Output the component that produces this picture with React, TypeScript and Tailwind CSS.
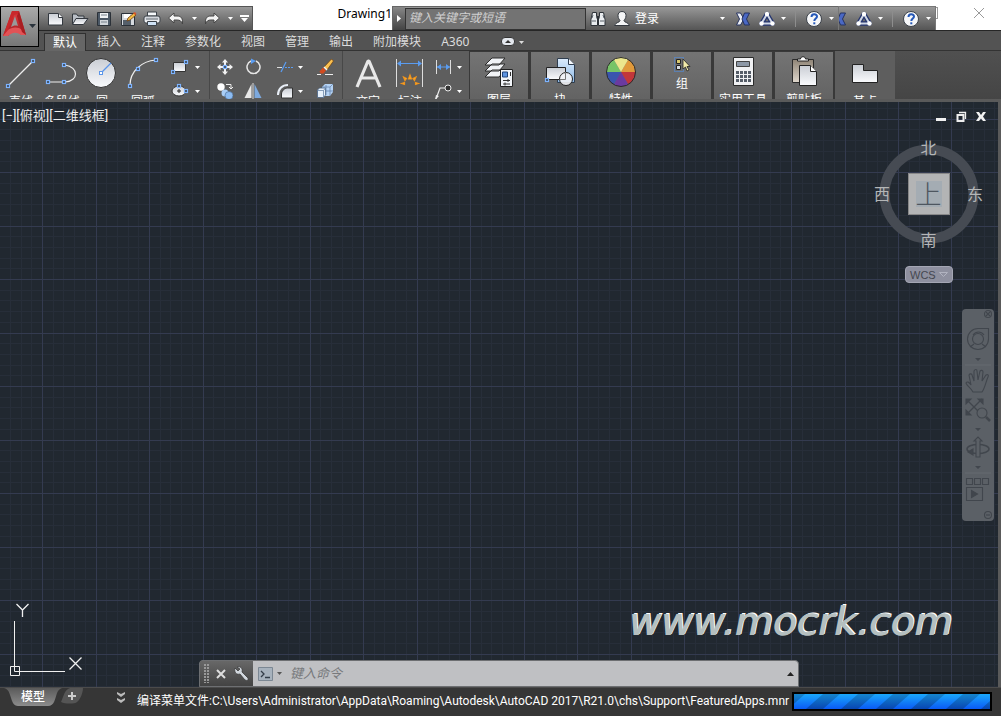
import { ReactNode } from "react";
import clsx from "clsx";

interface IconProps {
  size?: number;
  children: ReactNode;
}

const Icon = ({ size = 18, children }: IconProps) => (
  <svg width={size} height={size} viewBox={`0 0 ${size} ${size}`} fill="none" className="shrink-0" aria-hidden="true">
    {children}
  </svg>
);

// shared gradients for the icons
const Gradients = () => (
  <svg width="0" height="0" className="absolute" aria-hidden="true">
    <defs>
      <linearGradient id="paper" x1="0" y1="0" x2="0" y2="1">
        <stop offset="0" stopColor="#c9cdd4" />
        <stop offset="1" stopColor="#fafbfd" />
      </linearGradient>
      <linearGradient id="blue" x1="0" y1="0" x2="0" y2="1">
        <stop offset="0" stopColor="#dcebfb" />
        <stop offset="1" stopColor="#8db9e6" />
      </linearGradient>
      <linearGradient id="tan" x1="0" y1="0" x2="0" y2="1">
        <stop offset="0" stopColor="#8f8476" />
        <stop offset="1" stopColor="#e0d8cd" />
      </linearGradient>
      <linearGradient id="red" x1="0" y1="0" x2="0" y2="1">
        <stop offset="0" stopColor="#e2393d" />
        <stop offset="1" stopColor="#9b1c20" />
      </linearGradient>
      <linearGradient id="tab" x1="0" y1="0" x2="0" y2="1">
        <stop offset="0" stopColor="#5a5a5a" />
        <stop offset="1" stopColor="#8c8c8c" />
      </linearGradient>
    </defs>
  </svg>
);

const Grip = ({ x, y }: { x: number; y: number }) => (
  <rect x={x - 1.5} y={y - 1.5} width="3" height="3" fill="#3c4550" stroke="#7db3ff" strokeWidth="1.2" />
);

const Caret = ({ className }: { className?: string }) => (
  <button aria-label="更多" className={clsx("flex h-4 shrink-0 items-center justify-center", className)}>
    <svg width="5" height="3" viewBox="0 0 5 3" aria-hidden="true"><path d="M0 0h5L2.500 3z" fill="currentColor" /></svg>
  </button>
);

const NewIcon = () => (
  <Icon><path d="M1.500 3.500h10l4 3.500v8h-14z" fill="url(#paper)" stroke="#33383f" /><path d="M11.500 3.500v4h4" fill="#fff" stroke="#33383f" /></Icon>
);
const OpenIcon = () => (
  <Icon>
    <path d="M1.500 14V4h4l1.500 2h6v3" fill="#b9bec5" stroke="#33383f" />
    <path d="M1.500 14.500L5 8.500h12l-4.500 6z" fill="url(#paper)" stroke="#33383f" />
  </Icon>
);
const SaveIcon = () => (
  <Icon>
    <path d="M2.500 2.500h13v13h-13z" fill="#4b5866" stroke="#2b3138" />
    <path d="M5 3h8v5H5z" fill="#eef1f4" /><path d="M5 10h8v5H5z" fill="#d0d5da" />
    <path d="M6 12h6M6 5h6" stroke="#77818c" />
  </Icon>
);
const SaveAsIcon = () => (
  <Icon>
    <path d="M2.500 3.500h13v12h-13z" fill="#d6dadf" stroke="#2b3138" />
    <path d="M5 4h6v4H5z" fill="#fff" /><path d="M4 10h8v5H4z" fill="#555f6a" />
    <path d="M8 11l1-3 6-5 2 2-6 5z" fill="#f4bd45" stroke="#6c3e13" strokeWidth=".8" /><path d="M14 3l2-1 1.500 2-1.500 1z" fill="#d7562a" />
  </Icon>
);
const PrintIcon = () => (
  <Icon>
    <path d="M4.500 2h9v4h-9z" fill="#f6f8fa" stroke="#3c4249" />
    <rect x="1" y="6" width="16" height="7" rx="2" fill="url(#paper)" stroke="#3c4249" />
    <path d="M3 9h12" stroke="#616971" /><path d="M4.500 11.500h9v4h-9z" fill="#cfe2f5" stroke="#3c4249" />
  </Icon>
);
const UndoIcon = () => (
  <Icon><path d="M1.500 8l5.500-5v3h3c4 0 6 2 5.500 8-1-3-2.500-4-5.500-4H7v3z" fill="#f3f3f3" stroke="#454545" /></Icon>
);
const RedoIcon = () => (
  <Icon><path d="M16.500 8L11 3v3H8c-4 0-6 2-5.500 8 1-3 2.500-4 5.500-4h3v3z" fill="#f3f3f3" stroke="#454545" /></Icon>
);

const BinocularsIcon = () => (
  <Icon>
    <path d="M3.500 2.500h4v4l1 3v6h-6.500v-6zM14.500 2.500h-4v4l-1 3v6H16v-6z" fill="#e9ecef" stroke="#2d3238" />
    <path d="M8 6h2v4H8z" fill="#2d3238" /><path d="M3 8l1-3M15 8l-1-3M3 11h4M11 11h4" stroke="#5a626a" />
  </Icon>
);
const UserIcon = () => (
  <Icon><path d="M9 1.500c3 0 4 2 4 4 0 3-1.500 4-2 5 0 2 5 2 5.500 5h-15c.500-3 5.500-3 5.500-5-.500-1-2-2-2-5 0-2 1-4 4-4z" fill="#f4f5f6" stroke="#33383f" /></Icon>
);
const ExchangeIcon = () => (
  <Icon>
    <path d="M2.500 3h4l3.500 6-3.500 6h-4l3-6z" fill="#eceff5" stroke="#253260" />
    <path d="M15.500 3h-5L8 9l2.500 6h5l-3-6z" fill="#4a68c4" stroke="#253260" />
  </Icon>
);
const A360Icon = () => (
  <Icon>
    <path d="M9 4L14.500 13.500H3.500z" stroke="#25356f" strokeWidth="4.500" strokeLinejoin="round" />
    <path d="M9 4L14.500 13.500H3.500z" stroke="#cfd6e4" strokeWidth="2" strokeLinejoin="round" />
    <circle cx="9" cy="4" r="2.200" fill="#fff" /><circle cx="3.500" cy="13.500" r="2.200" fill="#fff" /><circle cx="14.500" cy="13.500" r="2.200" fill="#fff" />
  </Icon>
);
const HelpIcon = () => (
  <Icon>
    <circle cx="9" cy="9" r="7.500" fill="#f6f7f9" stroke="#3c424a" />
    <path d="M6.500 7c0-3.500 5.500-3.500 5.500-.500C12 8.500 9.300 8.500 9.300 11" stroke="#2558b8" strokeWidth="2" /><path d="M8.300 12.300h2v2h-2z" fill="#2558b8" />
  </Icon>
);

const quickTools = [
  { label: "新建", icon: NewIcon },
  { label: "打开", icon: OpenIcon },
  { label: "保存", icon: SaveIcon },
  { label: "另存为", icon: SaveAsIcon },
  { label: "打印", icon: PrintIcon },
  { label: "放弃", icon: UndoIcon, more: true },
  { label: "重做", icon: RedoIcon, more: true },
];

const ServiceTools = ({ clipped }: { clipped?: boolean }) => (
  <>
    <button aria-label="Exchange" className={clsx("flex h-full shrink-0 items-center overflow-hidden", clipped ? "w-[13px] justify-end pr-1" : "w-6 justify-center")}><ExchangeIcon /></button>
    <button aria-label="Autodesk 360" className="flex h-full w-6 shrink-0 items-center justify-center"><A360Icon /></button>
    <Caret className="w-2" />
    <span className="mx-2 h-4 w-px bg-[#8d8d8d]" />
    <button aria-label="帮助" className="flex h-full w-5 shrink-0 items-center justify-center"><HelpIcon /></button>
    <Caret className="w-[14px]" />
  </>
);

const TitleBar = () => (
  <header className="flex h-[31px] items-end border-b border-[#262626] bg-white text-white">
    <div className="ml-[39px] flex h-6 w-[214px] items-center border-t border-r border-[#555] bg-gradient-to-b from-[#999] to-[#555] pl-[5px]">
      {quickTools.map(({ label, icon: Glyph, more }) => (
        <div key={label} className="flex items-center">
          <button aria-label={label} className="flex h-5 w-6 items-center justify-center"><Glyph /></button>
          {more && <Caret className="w-3" />}
        </div>
      ))}
      <button aria-label="自定义" className="flex w-4 justify-center">
        <svg width="9" height="7" viewBox="0 0 9 7" aria-hidden="true"><path d="M0 0h9v2H0zM1 3h7L4.500 7z" fill="#fff" /></svg>
      </button>
    </div>
    <h1 className="flex-1 self-start pt-1 text-right text-xs leading-5 text-black">Drawing1</h1>
    <div className="flex h-6 w-[446px] items-center border-t border-l border-[#666] bg-gradient-to-b from-[#989898] to-[#555]">
      <button aria-label="展开" className="flex h-full w-3 items-center justify-center bg-gradient-to-b from-[#888] to-[#444]">
        <svg width="4" height="7" viewBox="0 0 4 7" aria-hidden="true"><path d="M0 0l4 3.500L0 7z" fill="#fff" /></svg>
      </button>
      <input aria-label="搜索" placeholder="键入关键字或短语" className="h-[22px] w-[181px] border border-[#333] bg-[#737373] px-[3px] pb-[2px] text-xs italic text-white placeholder:text-[#d0d0d0]" />
      <button aria-label="查找" className="flex w-6 justify-center"><BinocularsIcon /></button>
      <button className="flex flex-1 items-center gap-1 pl-[3px] text-xs"><UserIcon />登录</button>
      <Caret className="mr-px w-4" />
      <ServiceTools />
    </div>
    <div className="flex h-6 w-[98px] items-center border-t border-r border-l border-[#777] bg-gradient-to-b from-[#989898] to-[#555]">
      <ServiceTools clipped />
    </div>
    <div className="flex w-[65px] items-center justify-between self-start pt-[7px] pr-4 text-[#999]">
      <span className="h-3 w-[2px] border-y border-r border-[#999]" />
      <button aria-label="关闭">
        <svg width="12" height="12" viewBox="0 0 12 12" aria-hidden="true"><path d="M1 1l10 10M11 1L1 11" stroke="currentColor" /></svg>
      </button>
    </div>
  </header>
);

const AppButton = () => (
  <button aria-label="应用程序菜单" className="absolute top-[6px] left-0 z-10 flex h-[41px] w-[39px] items-center border border-black bg-gradient-to-b from-[#aaa] to-[#777]">
    <svg width="37" height="38" viewBox="0 0 37 38" aria-hidden="true">
      <path d="M2 28L11 3h7l7 24h-5l-2-5-8 2-3 4z" fill="url(#red)" />
      <path d="M10 19l4-11 3 10c-3-1-5 0-7 1z" fill="#999" />
      <path d="M2 28c2-6 9-10 16-8l5 3 2 4h-5c-5-4-10-2-13 1z" fill="#e25356" />
      <path d="M11 3h7l-1 3-4 1-6 15-5 6z" fill="#c9282c" /><path d="M18 3l7 24-4-3-5-16z" fill="#a91d21" />
      <path d="M28 16h7l-3.500 4z" fill="#2a333c" />
    </svg>
  </button>
);

const tabs = ["插入", "注释", "参数化", "视图", "管理", "输出", "附加模块", "A360"];

const TabBar = () => (
  <nav className="flex h-5 items-end border-b border-[#333] bg-[#535353] pl-[44px] text-xs leading-4 text-[#dcdcdc]">
    <button className="-mb-px mr-px h-[18px] border-x border-t border-[#303030] bg-[#666] px-2 text-white">默认</button>
    {tabs.map((tab) => (
      <button key={tab} className="h-[18px] px-[10px] pt-[2px]">{tab}</button>
    ))}
    <button aria-label="最小化功能区" className="ml-[22px] mb-1 flex h-[9px] w-[14px] items-center justify-center rounded-sm border border-[#333] bg-[#e4e8ee]">
      <svg width="6" height="3" viewBox="0 0 6 3" aria-hidden="true"><path d="M0 3h6L3 0z" fill="#333" /></svg>
    </button>
    <Caret className="w-3" />
  </nav>
);

interface ToolProps {
  label: string;
  className?: string;
  children: ReactNode;
}

const BigTool = ({ label, className, children }: ToolProps) => (
  <button className={clsx("flex shrink-0 flex-col items-center overflow-hidden pt-1", className)}>
    {children}
    <span className="text-xs leading-4 whitespace-nowrap">{label}</span>
  </button>
);

const SmallTool = ({ label, className, children }: ToolProps) => (
  <button aria-label={label} className={clsx("flex h-6 shrink-0 items-center justify-center", className)}>{children}</button>
);

const DrawPanel = () => (
  <section aria-label="绘图" className="flex border-r border-[#484848] pr-1">
    <BigTool label="直线" className="w-[42px] gap-[3px]">
      <Icon size={36}><path d="M5 31L30 6" stroke="#eee" strokeWidth="1.200" /><Grip x={5} y={31} /><Grip x={30} y={6} /></Icon>
    </BigTool>
    <BigTool label="多段线" className="w-10 gap-[3px]">
      <Icon size={36}><path d="M4 27h17c14-1 14-15 0-17" stroke="#eee" strokeWidth="1.200" /><Grip x={4} y={27} /><Grip x={20} y={27} /><Grip x={20} y={10} /></Icon>
    </BigTool>
    <BigTool label="圆" className="w-10 gap-[3px]">
      <Icon size={36}><circle cx="17" cy="18" r="14.500" fill="url(#paper)" stroke="#333" /><path d="M17 18L27 8" stroke="#5a95ea" strokeWidth="1.300" /><rect x="15.500" y="16.500" width="3" height="3" fill="#fff" stroke="#5a95ea" /></Icon>
    </BigTool>
    <BigTool label="圆弧" className="w-[42px] gap-[3px]">
      <Icon size={36}><path d="M5 30C5 17 16 6 31 5" stroke="#eee" strokeWidth="1.200" /><Grip x={5} y={31} /><Grip x={13} y={14} /><Grip x={31} y={5} /></Icon>
    </BigTool>
    <div className="pt-1 pl-[7px]">
      <div className="flex items-center">
        <SmallTool label="矩形" className="w-[18px]">
          <Icon><path d="M2.500 4.500h12v9h-12z" fill="url(#paper)" stroke="#333" /><Grip x={2} y={14} /><Grip x={15} y={4} /></Icon>
        </SmallTool>
        <Caret className="w-4" />
      </div>
      <div className="flex items-center">
        <SmallTool label="椭圆" className="w-[18px]">
          <Icon><ellipse cx="8" cy="9" rx="7" ry="5" fill="url(#paper)" stroke="#333" /><path d="M6 9h4M8 7v4" stroke="#222" /><Grip x={8} y={4} /><Grip x={15} y={9} /></Icon>
        </SmallTool>
        <Caret className="w-4" />
      </div>
    </div>
  </section>
);

const ModifyPanel = () => (
  <section aria-label="修改" className="border-r border-[#484848] pt-1 pr-[2px] pl-px">
    <div className="flex items-center">
      <SmallTool label="移动" className="w-7">
        <Icon><path d="M9 1l3 3.500h-2V7H8V4.500H6zM9 17l3-3.500h-2V11H8v2.500H6zM1 9l3.500-3v2H7v2H4.500v2zM17 9l-3.500-3v2H11v2h2.500v2z" fill="#f2f2f2" /><Grip x={9} y={9} /></Icon>
      </SmallTool>
      <SmallTool label="旋转" className="w-7">
        <Icon><path d="M12 3a6.500 6.500 0 1 1-5 0" stroke="#e6e6e6" strokeWidth="1.500" /><path d="M7 0.500l5 2.500-5 3z" fill="#5a9cf0" /></Icon>
      </SmallTool>
      <SmallTool label="修剪" className="ml-[7px] w-[22px]">
        <Icon><path d="M1 9.500h5" stroke="#dcdcdc" /><path d="M5 14l5-10" stroke="#5a9cf0" strokeWidth="1.300" /><path d="M9 9.500h9" stroke="#5a9cf0" strokeDasharray="2 1" /></Icon>
      </SmallTool>
      <Caret className="w-2" />
      <SmallTool label="删除" className="ml-[6px] w-[30px]">
        <Icon><path d="M1 16.500h4M9 16.500h8" stroke="#eee" /><path d="M8 9l7.500-8 2 2L11 12z" fill="#f9c050" stroke="#6b3e10" strokeWidth=".7" /><path d="M8 9l3 3" stroke="#f4f4f4" strokeWidth="1.500" /><path d="M7 9.500l3 3-2.500 3H4.500l-1-2z" fill="#d24a1e" /></Icon>
      </SmallTool>
    </div>
    <div className="flex items-center">
      <SmallTool label="复制" className="w-7">
        <Icon><circle cx="5" cy="5" r="3.700" fill="#fff" /><circle cx="9" cy="11" r="3.500" fill="#a9cdf6" /><circle cx="13" cy="13.500" r="4" fill="#8dbcf2" stroke="#44668f" strokeWidth=".6" /><path d="M10 2.500h5v4M13 5l2 2 2-2" stroke="#eee" /></Icon>
      </SmallTool>
      <SmallTool label="镜像" className="w-7">
        <Icon><path d="M7.500 2v14h-7z" fill="#e8e8e8" /><path d="M10.500 2v14h7z" fill="#7da9de" /><path d="M9 1v17" stroke="#ddd" /></Icon>
      </SmallTool>
      <SmallTool label="圆角" className="ml-[7px] w-[22px]">
        <Icon><path d="M5.500 16V12c0-3 3-6 6-6h5v10z" fill="url(#paper)" stroke="#333" /><path d="M2 13C2 7 6 3 12 3" stroke="#e8eef6" strokeWidth="2" /></Icon>
      </SmallTool>
      <Caret className="w-2" />
      <SmallTool label="阵列" className="ml-[6px] w-[30px]">
        <Icon><path d="M6 5l3-3h8v8l-3 4H6z" fill="#b5d3f5" /><path d="M6 5h8v9M14 5l3-3M10 3v10M6 9h11" stroke="#5b7da6" strokeWidth=".7" /><path d="M1.500 8l2-2h6v7l-2 2.500h-6z" fill="#e6f0fb" stroke="#4a6487" strokeWidth=".8" /><path d="M1.500 8.500h6v7M7.500 8.500l2-2.500" stroke="#6b87a8" strokeWidth=".8" /></Icon>
      </SmallTool>
    </div>
  </section>
);

const AnnotatePanel = () => (
  <section aria-label="注释" className="flex">
    <BigTool label="文字" className="w-[50px] gap-[3px]">
      <Icon size={36}><path d="M7 32L18 6h1L30 32M11 23h15" stroke="#e8e8e8" strokeWidth="3.200" strokeLinejoin="bevel" /></Icon>
    </BigTool>
    <BigTool label="标注" className="w-[34px] gap-[3px]">
      <Icon size={36}>
        <path d="M4.500 4v28M30.500 4v28" stroke="#ddd" /><path d="M6 8.500h23" stroke="#5a9cf0" /><path d="M5 8.500l4-3v6zM30 8.500l-4-3v6z" fill="#5a9cf0" />
        <path d="M18 20l-1.500 4h3zM11.500 22l1.500 3.500 1.500-2zM24 22l-1.500 3.500-1.500-2zM9.500 28.500l3 1v-2zM26.500 28.500l-3 1v-2z" fill="#fbd04a" stroke="#f0931c" strokeWidth="1.200" />
      </Icon>
    </BigTool>
    <div className="pt-1 pl-[5px]">
      <div className="flex items-center">
        <SmallTool label="线性" className="w-[22px]">
          <Icon><path d="M2.500 2v14M16.500 2v14" stroke="#ddd" /><path d="M3 9h13" stroke="#5a9cf0" /><path d="M3 9l4-3v6zM16 9l-4-3v6z" fill="#5a9cf0" /></Icon>
        </SmallTool>
        <Caret className="w-[10px]" />
      </div>
      <div className="flex items-center">
        <SmallTool label="引线" className="w-[22px]">
          <Icon><path d="M2 17L6 6h5" stroke="#eee" strokeWidth="1.200" /><path d="M1 18l1-5 3 1z" fill="#eee" /><circle cx="14" cy="6" r="3" fill="#333" stroke="#eee" /></Icon>
        </SmallTool>
        <Caret className="w-[10px]" />
      </div>
    </div>
  </section>
);

const LayersIcon = () => (
  <Icon size={36}>
    <path d="M4 21l7-7h13l-6 7zM4 15l7-7h13l-6 7zM4 9l7-7h13l-6 7z" fill="#f1f3f6" stroke="#2c2c2c" />
    <path d="M19.500 13.500h12v17h-12z" fill="#f1f4f8" stroke="#222" /><path d="M21.500 16h5v5h-5z" fill="#5c93df" stroke="#20447b" /><path d="M29.500 16v4M22 24.500h7M22 28h7M27 23v3M24 26.500v3" stroke="#333" />
  </Icon>
);
const BlockIcon = () => (
  <Icon size={36}>
    <path d="M15.500 2.500h11l6 6v18h-17z" fill="url(#blue)" stroke="#2f3d4e" /><path d="M26.500 2.500v6h6" fill="#f6f8fb" stroke="#2f3d4e" />
    <path d="M4.500 11.500h19v12h-19z" fill="url(#paper)" stroke="#222" /><circle cx="24" cy="23" r="6.500" fill="#f1f2f5" fillOpacity=".9" stroke="#222" /><path d="M23.500 16v7.500h-6" stroke="#777" /><Grip x={5} y={24} />
  </Icon>
);
const wheel = ["#e0993a", "#c2363a", "#6b3aa0", "#3a55ae", "#76c467", "#ece68c"];
const ColorIcon = () => (
  <Icon size={36}>
    {wheel.map((color, i) => (
      <path key={color} d="M18 16L25.250 3.440A14.500 14.500 0 0 1 32.500 16Z" fill={color} transform={`rotate(${i * 60} 18 16)`} />
    ))}
    <circle cx="18" cy="16" r="14.500" stroke="#2b2b2b" />
  </Icon>
);
const GroupIcon = () => (
  <Icon size={20}>
    <path d="M2.500 1.500h9v14h-9z" stroke="#4d93f2" strokeDasharray="1 1" /><path d="M4.500 3.500h4v4h-4z" fill="#d9c96e" stroke="#222" /><path d="M4.500 9.500h4v4h-4z" fill="#d9dde2" stroke="#222" />
    <path d="M11 3v10l2.500-2 1.500 4 2-1-2-3.500h3z" fill="#f3ecaa" stroke="#222" strokeWidth=".8" />
  </Icon>
);
const CalculatorIcon = () => (
  <Icon size={36}>
    <path d="M8.500 1.500h20v28h-20z" fill="#f0f1f3" stroke="#2b2b2b" /><path d="M11.500 5.500h13v5h-13z" fill="#8d98a6" stroke="#444" />
    <path d="M11 16.500h15M11 20.500h15M11 24.500h15" stroke="#555d68" strokeWidth="3" strokeDasharray="3 1" />
  </Icon>
);
const ClipboardIcon = () => (
  <Icon size={36}>
    <path d="M6.500 3.500h21v23h-21z" fill="url(#tan)" stroke="#2b2b2b" /><path d="M11.500 5V3h3c0-3 5-3 5 0h3v2z" fill="#fff" stroke="#222" />
    <path d="M13.500 9.500h11l6 6v14h-17z" fill="url(#paper)" stroke="#222" /><path d="M24.500 9.500v6h6" fill="#fff" stroke="#222" />
  </Icon>
);
const BaseIcon = () => (
  <Icon size={36}><path d="M5.500 9.500h11v6h14v12h-25z" fill="url(#paper)" stroke="#222" /></Icon>
);

const groups = [
  { label: "图层", icon: LayersIcon },
  { label: "块", icon: BlockIcon },
  { label: "特性", icon: ColorIcon },
  { label: "组", icon: GroupIcon },
  { label: "实用工具", icon: CalculatorIcon },
  { label: "剪贴板", icon: ClipboardIcon },
];

const Ribbon = () => (
  <div className="flex h-12 overflow-hidden bg-gradient-to-b from-[#505050] to-[#454545] text-white">
    <div className="flex w-[469px] shrink-0 bg-[#5e5e5e]">
      <DrawPanel />
      <ModifyPanel />
      <AnnotatePanel />
    </div>
    {groups.map(({ label, icon: Glyph }) => (
      <BigTool key={label} label={label} className="w-[61px] border-x border-t border-[#393939] border-r-2 bg-gradient-to-b from-[#747474] to-[#636363]">
        <Glyph />
      </BigTool>
    ))}
    <BigTool label="基点" className="w-[60px] gap-[3px] bg-[#5e5e5e]"><BaseIcon /></BigTool>
  </div>
);

// every fifth line is a major one
const Grid = () => {
  const lines = Array.from({ length: 240 }, (_, i) => i - 4);
  return (
    <svg className="absolute inset-0 h-full w-full" shapeRendering="crispEdges" aria-hidden="true">
      {[false, true].map((major) => (
        <g key={String(major)} fill={major ? "#343b50" : "#272e39"}>
          {lines.filter((i) => (i % 5 === 0) === major).map((i) => (
            <g key={i}>
              <rect x={Math.floor(42.5 + i * 10.7)} y="0" width="1" height="100%" />
              <rect x="0" y={Math.floor(17 + i * 10.7)} width="100%" height="1" />
            </g>
          ))}
        </g>
      ))}
    </svg>
  );
};

const ViewCube = () => (
  <div className="absolute top-[36px] right-[15px] grid h-[112px] w-[109px] grid-cols-3 grid-rows-3 place-items-center text-base text-[#b4b6b7]">
    <svg width="100" height="100" viewBox="0 0 100 100" className="absolute" aria-hidden="true">
      <circle cx="50" cy="50" r="44.500" fill="none" stroke="#464b53" strokeWidth="10" />
    </svg>
    <button className="relative col-start-2 row-start-1 self-start leading-5">北</button>
    <button className="relative col-start-1 row-start-2 justify-self-start">西</button>
    <button className="relative col-start-2 row-start-2 flex h-[42px] w-[42px] items-center justify-center border border-[#888] bg-[#b3b4b5]">
      <span className="h-[26px] w-[26px] bg-[#a4acb3] text-center text-[26px] leading-[26px] font-light text-[#4e565f]">上</span>
    </button>
    <button className="relative col-start-3 row-start-2 justify-self-end">东</button>
    <button className="relative col-start-2 row-start-3 self-end leading-5">南</button>
  </div>
);

const NavBar = () => (
  <aside aria-label="导航栏" className="absolute top-[207px] right-[4px] h-[212px] w-8 rounded-sm bg-[#5b6066] text-[#41464d]">
    <svg width="32" height="212" viewBox="0 0 32 212" fill="none" stroke="currentColor" strokeWidth="1.100" aria-hidden="true">
      <circle cx="26" cy="5" r="3.500" /><path d="M24 3l4 4M28 3l-4 4" />
      <path d="M16 19.500h10.500v10.500a10.500 10.500 0 1 1-10.500-10.500z" /><circle cx="16" cy="30" r="5.500" /><path d="M11 26c3-4 8-4 11 0M12 35l-4 3M20 35l4 3" />
      <path d="M13 49h6l-3 3zM13 119h6l-3 3zM13 157h6l-3 3z" fill="currentColor" stroke="none" />
      <path d="M3 56h26M3 164h26" stroke="#666b71" />
      <path d="M11 83c-2-4-6-6-7-9 1-2 3-1 5 2L7 66c1-2 3-1 3 0l2 6V62c1-2 3-2 3 0l1 9 2-9c1-1 3-1 3 1l-1 9 4-6c2-1 3 0 2 2-2 4-3 11-6 15z" />
      <path d="M5 91l15 15M20 90L5 105" strokeWidth="1.300" /><path d="M4 90h5l-5 5zM21 90h-5l5 5zM4 106h5l-5-5z" fill="currentColor" />
      <circle cx="20" cy="104" r="5" fill="#5b6066" /><path d="M24 108l4 4" strokeWidth="2.500" />
      <ellipse cx="16" cy="140" rx="11" ry="4.500" strokeWidth="1.500" /><path d="M14 148v-16h-2l4-4 4 4h-2v16z" fill="#5b6066" /><path d="M6 143l5-3v6z" fill="currentColor" />
      <path d="M4.500 169.500h6v6h-6zM12.500 169.500h6v6h-6zM20.500 169.500h6v6h-6zM4.500 178.500h16v13h-16z" /><path d="M9.500 181.500l6 3.500-6 3.500z" fill="currentColor" />
      <circle cx="26" cy="206" r="3.500" /><path d="M24 206h4" />
    </svg>
  </aside>
);

const CommandLine = () => (
  <div className="absolute bottom-0 left-[199px] flex h-[27px] w-[600px] items-stretch rounded-t-sm border border-[#6d6f72] bg-[#bfc0c3]">
    <div className="flex w-[53px] items-center gap-[7px] bg-gradient-to-b from-[#686868] to-[#434343] pl-1">
      <svg width="5" height="19" viewBox="0 0 5 19" aria-hidden="true"><path d="M1 0v19M4 0v19" stroke="#999" strokeWidth="2" strokeDasharray="2 1" /></svg>
      <button aria-label="关闭命令行">
        <svg width="10" height="10" viewBox="0 0 10 10" aria-hidden="true"><path d="M1 1l8 8M9 1L1 9" stroke="#ddd" strokeWidth="2" /></svg>
      </button>
      <button aria-label="自定义命令行">
        <svg width="16" height="16" viewBox="0 0 16 16" aria-hidden="true"><path d="M2 2l3 3 2-2-3-2c3-1 6 1 5 5l6 6c1 2-1 3-3 2L7 8C3 9 1 6 2 2z" fill="#d2d8de" stroke="#333" strokeWidth=".7" /></svg>
      </button>
    </div>
    <label className="flex flex-1 items-center pl-[5px]">
      <svg width="15" height="14" viewBox="0 0 15 14" aria-hidden="true"><path d="M.5.5h14v13H.5z" fill="#a7b2bd" stroke="#7b8793" /><path d="M3 4l3 3-3 3M7 10.500h5" fill="none" stroke="#333d48" strokeWidth="1.300" /></svg>
      <svg width="5" height="3" viewBox="0 0 5 3" className="ml-1 text-[#555]" aria-hidden="true"><path d="M0 0h5L2.500 3z" fill="currentColor" /></svg>
      <input aria-label="命令" placeholder="键入命令" className="ml-2 min-w-0 flex-1 bg-transparent text-[13px] italic text-black placeholder:text-[#77797c]" />
    </label>
    <button aria-label="历史记录" className="px-1">
      <svg width="7" height="4" viewBox="0 0 7 4" aria-hidden="true"><path d="M0 4h7L3.500 0z" fill="#222" /></svg>
    </button>
  </div>
);

const Canvas = () => (
  <main className="flex min-h-[440px] flex-1 border-t-[3px] border-[#5a5a5a]">
    <div className="relative flex-1 overflow-hidden bg-[#212830]">
      <Grid />
      <div className="relative flex items-start justify-between pt-[5px] pr-[11px] pl-[2px] text-[#eee]">
        <p className="font-['Roboto','Noto_Sans_CJK_SC',sans-serif] text-[13px] leading-[18px]">[−][俯视][二维线框]</p>
        <div className="flex gap-2 pt-1">
          <button aria-label="最小化"><Icon size={12}><path d="M1 7h10v3H1z" fill="#f1f1f1" /></Icon></button>
          <button aria-label="还原"><Icon size={12}><path d="M4 1.500h6.500V8" stroke="#eee" strokeWidth="1.300" /><path d="M2.500 4h6v6h-6z" stroke="#eee" strokeWidth="2" /></Icon></button>
          <button aria-label="关闭图形"><Icon size={12}><path d="M1 1h3l2 3 2-3h3L8 5.500 11 10H8L6 7.500 4 10H1l3-4.500z" fill="#f1f1f1" /></Icon></button>
        </div>
      </div>
      <ViewCube />
      <button className="absolute top-[164px] right-[45px] flex h-[17px] w-12 items-center justify-between rounded-sm border border-[#a5a7b4] bg-[#8e909f] px-1 font-['Liberation_Sans'] text-[11px] leading-3 text-[#45474f]">
        WCS
        <svg width="9" height="5" viewBox="0 0 9 5" aria-hidden="true"><path d="M.5.5h8L4.500 4.500z" fill="none" stroke="#b1b3c0" /></svg>
      </button>
      <NavBar />
      <svg width="90" height="80" viewBox="0 0 90 80" fill="none" stroke="#f0f0f0" className="absolute bottom-[4px] left-[5px]" aria-hidden="true">
        <path d="M9.500 18v50.500h50.500M5.500 63.500h9v9h-9z" /><path d="M11.500 1l6 6 6-6M17.500 7v7M64.500 54.500l12 12M76.500 54.500l-12 12" strokeWidth="1.300" />
      </svg>
      <p className="absolute right-[46px] bottom-[40px] font-['DejaVu_Sans'] text-[39px] leading-[50px] italic text-[#b5bfbf] [text-shadow:1px_0_0_#b5bfbf,2px_-1px_0_#fff]">www.mocrk.com</p>
      <CommandLine />
    </div>
    <div className="w-[3px] bg-[#5a5a5a]" />
  </main>
);

const StatusBar = () => (
  <footer className="flex h-[29px] items-start border-t border-[#4b4b4b] bg-[#363636] pl-1 text-xs text-white">
    <button className="relative h-[18px] w-[58px] leading-[18px] font-medium">
      <svg width="58" height="18" viewBox="0 0 58 18" className="absolute inset-0" aria-hidden="true"><path d="M0 0c6 1 6 9 9 15 1 2 3 3 5 3h30c3 0 5-2 6-4 3-6 2-12 8-14z" fill="url(#tab)" /></svg>
      <span className="relative">模型</span>
    </button>
    <button aria-label="新建布局" className="-ml-[2px] w-6">
      <svg width="24" height="16" viewBox="0 0 24 16" aria-hidden="true"><path d="M1 14C4 8 4 2 10 0h13c0 5-3 12-6 14-2 2-12 2-16 0z" fill="#555" /><path d="M8 8h8M12 4v8" stroke="#ccc" strokeWidth="2" /></svg>
    </button>
    <button aria-label="更多布局" className="mt-1 ml-[33px]">
      <svg width="8" height="12" viewBox="0 0 8 12" aria-hidden="true"><path d="M0 0l4 2 4-2v2L4 5 0 2zM0 6l4 2 4-2v2l-4 3-4-3z" fill="#bbb" /></svg>
    </button>
    <p className="ml-3 flex-1 pt-1 font-['Roboto','Noto_Sans_CJK_SC',sans-serif] leading-[18px] whitespace-nowrap">编译菜单文件:C:\Users\Administrator\AppData\Roaming\Autodesk\AutoCAD 2017\R21.0\chs\Support\FeaturedApps.mnr</p>
    <div role="progressbar" aria-label="编译进度" className="mt-1 mr-[9px] h-[19px] w-[200px] shrink-0 overflow-hidden border-2 border-black">
      <svg width="196" height="15" viewBox="0 0 196 15" className="block" aria-hidden="true">
        <defs>
          <linearGradient id="bright" x1="0" y1="0" x2="0" y2="1"><stop offset="0" stopColor="#1aa8fb" /><stop offset="1" stopColor="#0a5af5" /></linearGradient>
          <linearGradient id="deep" x1="0" y1="0" x2="0" y2="1"><stop offset="0" stopColor="#1585cc" /><stop offset="1" stopColor="#0846b4" /></linearGradient>
        </defs>
        <rect width="196" height="15" fill="url(#bright)" />
        {[-23, 12, 47, 82, 117, 152, 187].map((x) => (
          <path key={x} d={`M${x + 17} 0h17l-17 15h-17z`} fill="url(#deep)" />
        ))}
      </svg>
    </div>
  </footer>
);

export default function App() {
  return (
    <div className="relative flex min-h-screen flex-col bg-[#363636] font-['Noto_Sans','Noto_Sans_CJK_SC',sans-serif]">
      <Gradients />
      <AppButton />
      <TitleBar />
      <TabBar />
      <Ribbon />
      <Canvas />
      <StatusBar />
    </div>
  );
}
